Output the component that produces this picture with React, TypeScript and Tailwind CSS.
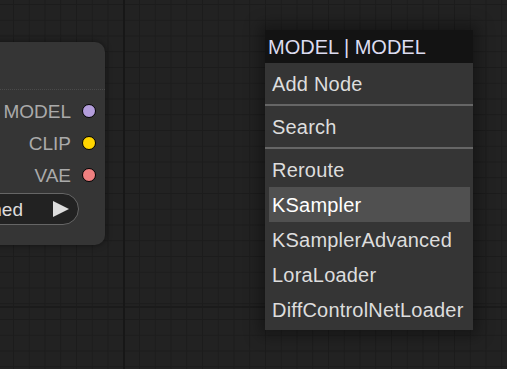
const outputs = [
  { name: "MODEL", color: "bg-[#b39ddb]" },
  { name: "CLIP", color: "bg-[#ffd500]" },
  { name: "VAE", color: "bg-[#f08080]" },
];

const menuItems: { label: string; active?: boolean; separator?: boolean }[] = [
  { label: "Add Node", separator: true },
  { label: "Search", separator: true },
  { label: "Reroute" },
  { label: "KSampler", active: true },
  { label: "KSamplerAdvanced" },
  { label: "LoraLoader" },
  { label: "DiffControlNetLoader" },
];

function CheckpointNode() {
  return (
    <div className="absolute left-[-30px] top-[42px] w-[135px] h-[203px] rounded-[10px] bg-[#353535] shadow-[0_0_6px_rgba(0,0,0,0.5)] overflow-hidden">
      <div className="h-[48px] border-b border-dotted border-[#4a4a4a]" />
      <div className="flex flex-col pt-[5px]">
        {outputs.map((o) => (
          <div key={o.name} className="h-[32px] flex items-center justify-end pr-[9px] gap-[11px]">
            <span className="text-[19px] text-[#aaaaaa] leading-none">{o.name}</span>
            <span className={`w-[14px] h-[14px] rounded-full border-[1.5px] border-black ${o.color}`} />
          </div>
        ))}
      </div>
      <div className="mt-[2px] ml-[8px] mr-[26px] h-[32px] rounded-full bg-[#222222] border border-[#666666] flex items-center justify-end overflow-hidden">
        <span className="text-[19px] text-[#dddddd] leading-none whitespace-nowrap">v1-5-pruned</span>
        <span className="ml-[30px] mr-[9px] w-0 h-0 border-y-[8px] border-y-transparent border-l-[16px] border-l-[#dddddd]" />
      </div>
    </div>
  );
}

function ContextMenu() {
  return (
    <div className="absolute left-[265px] top-[30px] w-[208px] bg-[#353535] shadow-[0_0_14px_6px_rgba(0,0,0,0.35)]">
      <div className="h-[33px] bg-[#131313] px-[3px] flex items-center">
        <span className="text-[20px] text-[#dcdcf0] leading-none">MODEL | MODEL</span>
      </div>
      <div className="flex flex-col pt-[3px] pb-[3px]">
        {menuItems.map((item) => (
          <div key={item.label}>
            <div
              className={`h-[35px] ml-[4px] mr-[3px] px-[3px] flex items-center ${
                item.active ? "bg-[#505050] text-white" : "text-[#dddddd]"
              }`}
            >
              <span className="text-[20px] leading-none whitespace-nowrap tracking-[0.2px]">{item.label}</span>
            </div>
            {item.separator && (
              <div className="h-[8px] flex items-center">
                <div className="w-full h-[2px] bg-[#666666]" />
              </div>
            )}
          </div>
        ))}
      </div>
    </div>
  );
}

export default function App() {
  return (
    <div
      className="relative w-[507px] h-[369px] overflow-hidden bg-[#222222] font-['Liberation_Sans',Arial,sans-serif]
        bg-[linear-gradient(to_right,#171717_2px,transparent_2px),linear-gradient(to_bottom,#1b1b1b_2px,transparent_2px),linear-gradient(to_right,#1c1c1c_1px,transparent_1px),linear-gradient(to_bottom,#1c1c1c_1px,transparent_1px)]
        bg-[size:1000px_1000px,1000px_1000px,15.75px_15.75px,15.75px_15.75px]
        bg-[position:123px_0,0_306px,13px_4px,13px_4px]"
    >
      <CheckpointNode />
      <ContextMenu />
    </div>
  );
}
